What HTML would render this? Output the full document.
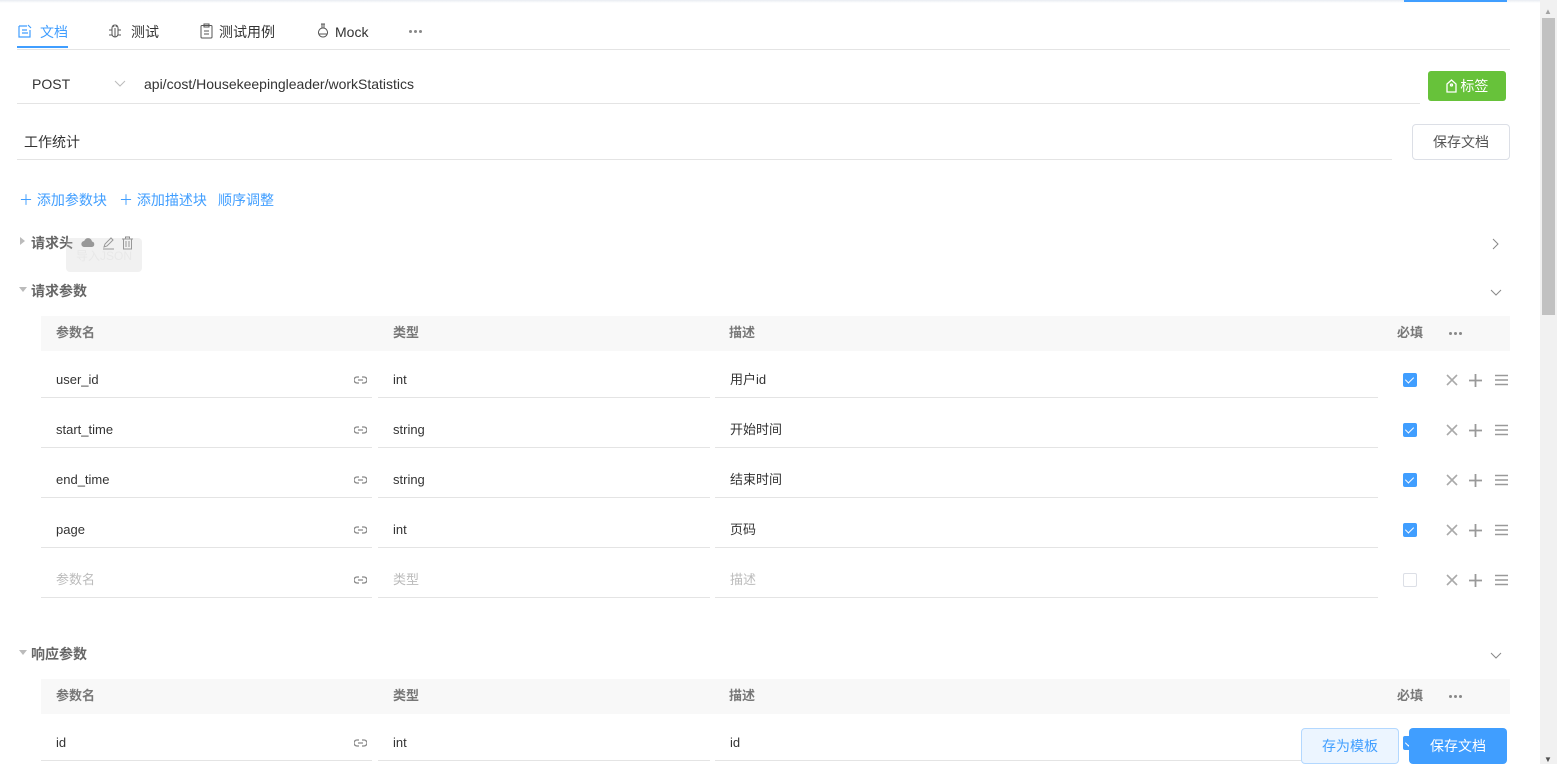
<!DOCTYPE html><html><head><meta charset="utf-8"><style>
*{margin:0;padding:0;box-sizing:border-box}
body{width:1557px;height:764px;overflow:hidden;background:#fff;font-family:"Liberation Sans","Noto Sans CJK SC",sans-serif;font-size:13px;color:#333;position:relative}
.a{position:absolute;line-height:16px;white-space:nowrap}
.hl{position:absolute;height:1px;background:#e4e4e4}
.th{position:absolute;left:41px;width:1469px;height:35px;background:#f8f8f8;color:#777;font-weight:bold;font-size:13px}
.th span{position:absolute;top:9px;line-height:16px}
.cb{position:absolute;left:1403px;width:14px;height:14px;border-radius:2px;background:#409eff}
.cb:after{content:"";position:absolute;left:4px;top:2px;width:4px;height:7px;border:solid #fff;border-width:0 1.5px 1.5px 0;transform:rotate(45deg)}
.dots{position:absolute;display:flex;gap:2px}
.dots i{width:3px;height:3px;border-radius:50%;background:#888}
</style></head><body>
<div class="hl" style="left:0;top:0;width:1540px;height:3px;background:linear-gradient(#e8ecf2,#fff)"></div>
<div class="a" style="left:1404px;top:0;width:103px;height:2px;background:#409eff"></div>
<!-- tabs -->
<svg class="a" style="left:18px;top:24px" width="14" height="14" fill="none" stroke="#409eff" stroke-width="1.2"><path d="M1 2h8M1 2v11h11V6M4 6h5M4 9h6M10 1l3 3"/></svg>
<div class="a" style="left:40px;top:24px;color:#409eff;font-size:14px">文档</div>
<div class="a" style="left:17px;top:46px;width:51px;height:2px;background:#409eff"></div>
<svg class="a" style="left:108px;top:24px" width="14" height="15" fill="none" stroke="#555"><path d="M4 4a3 3 0 0 1 6 0v6a3 3 0 0 1-6 0zM7 4v9M1 6h3M10 6h3M1 11h3M10 11h3M5 1l1 2M9 1l-1 2"/></svg>
<div class="a" style="left:131px;top:24px;font-size:14px">测试</div>
<svg class="a" style="left:200px;top:23px" width="13" height="16" fill="none" stroke="#555"><rect x="1" y="2.5" width="11" height="12.5" rx="1"/><path d="M4 1h5v3H4zM4 8h5M4 11h5"/></svg>
<div class="a" style="left:219px;top:24px;font-size:14px">测试用例</div>
<svg class="a" style="left:317px;top:23px" width="12" height="16" fill="none" stroke="#555"><path d="M4 1h4M5 1v4M7 1v4M6 5a4.5 4.5 0 1 0 .01 0M2 11h8"/></svg>
<div class="a" style="left:335px;top:24px;font-size:14px">Mock</div>
<div class="dots" style="left:409px;top:30px"><i></i><i></i><i></i></div>
<div class="hl" style="left:17px;top:49px;width:1493px"></div>
<!-- url -->
<div class="a" style="left:32px;top:76px;font-size:14px">POST</div>
<svg class="a" style="left:114px;top:80px" width="12" height="8" fill="none" stroke="#bbb"><path d="M1 1l5 5l5-5"/></svg>
<div class="a" style="left:144px;top:76px;font-size:14px">api/cost/Housekeepingleader/workStatistics</div>
<div class="hl" style="left:17px;top:103px;width:1403px"></div>
<div class="a" style="left:1428px;top:71px;width:78px;height:30px;background:#67c23a;border-radius:3px;color:#fff;font-size:14px;text-align:center;line-height:30px"><svg width="11" height="14" style="vertical-align:-2px" fill="none" stroke="#fff" stroke-width="1.3"><path d="M1 5l4.5-4l4.5 4v8H1z"/><circle cx="5.5" cy="6" r="1"/></svg> 标签</div>
<div class="a" style="left:24px;top:134px;font-size:14px">工作统计</div>
<div class="hl" style="left:17px;top:159px;width:1375px"></div>
<div class="a" style="left:1412px;top:124px;width:98px;height:36px;border:1px solid #dcdfe6;border-radius:4px;text-align:center;line-height:34px;font-size:14px;color:#555">保存文档</div>
<div class="a" style="left:19px;top:192px;color:#409eff;font-size:14px">＋ 添加参数块</div>
<div class="a" style="left:119px;top:192px;color:#409eff;font-size:14px">＋ 添加描述块</div>
<div class="a" style="left:218px;top:192px;color:#409eff;font-size:14px">顺序调整</div>
<!-- sections -->
<div class="a" style="left:20px;top:237px;width:0;height:0;border:4px solid transparent;border-left:5px solid #bbb"></div>
<div class="a" style="left:31px;top:235px;color:#666;font-size:14px;font-weight:bold">请求头</div>
<svg class="a" style="left:81px;top:237px" width="14" height="12" fill="#888"><path d="M3.5 10a3 3 0 0 1-.3-6A4 4 0 0 1 11 4.5a2.8 2.8 0 0 1 0 5.5z"/></svg>
<svg class="a" style="left:102px;top:236px" width="13" height="14" fill="none" stroke="#888"><path d="M2 11l1-3l6-6l2 2l-6 6zM1 13h11"/></svg>
<svg class="a" style="left:121px;top:236px" width="13" height="14" fill="none" stroke="#888"><path d="M1 3h11M4.5 3V1h4v2M2.5 3v10h8V3M5 5v6M8 5v6"/></svg>
<div class="a" style="left:66px;top:238px;width:76px;height:34px;background:rgba(200,200,200,.25);border-radius:4px;color:#e8e8e8;text-align:center;line-height:36px;font-size:12px">导入JSON</div>
<svg class="a" style="left:1492px;top:238px" width="8" height="12" fill="none" stroke="#888"><path d="M1 1l5 5l-5 5"/></svg>
<div class="a" style="left:19px;top:287px;width:0;height:0;border:4px solid transparent;border-top:5px solid #bbb"></div>
<div class="a" style="left:31px;top:283px;color:#666;font-size:14px;font-weight:bold">请求参数</div>
<svg class="a" style="left:1490px;top:289px" width="12" height="8" fill="none" stroke="#888"><path d="M1 1l5 5l5-5"/></svg>
<div class="th" style="top:316px"><span style="left:15px">参数名</span><span style="left:352px">类型</span><span style="left:688px">描述</span><span style="left:1356px">必填</span></div>
<div class="dots" style="left:1449px;top:332px"><i></i><i></i><i></i></div>
<div id="rows"></div>
<div class="a" style="left:19px;top:650px;width:0;height:0;border:4px solid transparent;border-top:5px solid #bbb"></div>
<div class="a" style="left:31px;top:646px;color:#666;font-size:14px;font-weight:bold">响应参数</div>
<svg class="a" style="left:1490px;top:652px" width="12" height="8" fill="none" stroke="#888"><path d="M1 1l5 5l5-5"/></svg>
<div class="th" style="top:679px"><span style="left:15px">参数名</span><span style="left:352px">类型</span><span style="left:688px">描述</span><span style="left:1356px">必填</span></div>
<div class="dots" style="left:1449px;top:695px"><i></i><i></i><i></i></div>
<div class="a" style="left:56px;top:735px">id</div><div class="a" style="left:393px;top:735px">int</div><div class="a" style="left:730px;top:735px">id</div>
<div class="hl" style="left:41px;top:760px;width:331px"></div><div class="hl" style="left:378px;top:760px;width:332px"></div><div class="hl" style="left:715px;top:760px;width:663px"></div>
<svg class="a" style="left:354px;top:739px" width="13" height="8" fill="none" stroke="#888" stroke-width="1.3"><path d="M5 1H3a3 3 0 0 0 0 6h2M8 1h2a3 3 0 0 1 0 6H8M4 4h5"/></svg>
<div class="cb" style="top:736px"></div>
<div class="a" style="left:1301px;top:728px;width:98px;height:36px;background:#ecf5ff;border:1px solid #b3d8ff;border-radius:4px;color:#409eff;text-align:center;line-height:34px;font-size:14px">存为模板</div>
<div class="a" style="left:1409px;top:728px;width:98px;height:36px;background:#409eff;border-radius:4px;color:#fff;text-align:center;line-height:36px;font-size:14px">保存文档</div>
<!-- scrollbar -->
<div class="a" style="left:1540px;top:0;width:17px;height:764px;background:#f1f1f1"></div>
<div class="a" style="left:1542px;top:18px;width:13px;height:297px;background:#c1c1c1"></div>
<div class="a" style="left:1544px;top:4px;font-size:8px;color:#a3a3a3">▲</div>
<div class="a" style="left:1544px;top:752px;font-size:8px;color:#505050">▼</div>
<script>
var d=[["user_id","int","用户id",1],["start_time","string","开始时间",1],["end_time","string","结束时间",1],["page","int","页码",1],["参数名","类型","描述",0]],h="";
d.forEach(function(r,i){var y=372+i*50,c=r[3]?"#333":"#bbb";
h+='<div class="a" style="left:56px;top:'+y+'px;color:'+c+'">'+r[0]+'</div><div class="a" style="left:393px;top:'+y+'px;color:'+c+'">'+r[1]+'</div><div class="a" style="left:730px;top:'+y+'px;color:'+c+'">'+r[2]+'</div>';
h+='<div class="hl" style="left:41px;top:'+(y+25)+'px;width:331px"></div><div class="hl" style="left:378px;top:'+(y+25)+'px;width:332px"></div><div class="hl" style="left:715px;top:'+(y+25)+'px;width:663px"></div>';
h+='<svg class="a" style="left:354px;top:'+(y+4)+'px" width="13" height="8" fill="none" stroke="#888" stroke-width="1.3"><path d="M5 1H3a3 3 0 0 0 0 6h2M8 1h2a3 3 0 0 1 0 6H8M4 4h5"/></svg>';
h+=r[3]?'<div class="cb" style="top:'+(y+1)+'px"></div>':'<div class="a" style="left:1403px;top:'+(y+1)+'px;width:14px;height:14px;border:1px solid #dcdfe6;border-radius:2px"></div>';
var t=y+2;
h+='<svg class="a" style="left:1446px;top:'+t+'px" width="12" height="12" stroke="#aaa" stroke-width="1.6"><path d="M1 1l10 10M11 1L1 11"/></svg>';
h+='<svg class="a" style="left:1469px;top:'+t+'px" width="13" height="13" stroke="#999" stroke-width="1.8"><path d="M6.5 0v13M0 6.5h13"/></svg>';
h+='<svg class="a" style="left:1495px;top:'+t+'px" width="13" height="12" stroke="#999" stroke-width="1.4"><path d="M0 1.5h13M0 6h13M0 10.5h13"/></svg>';});
document.getElementById("rows").innerHTML=h;
</script>
</body></html>
